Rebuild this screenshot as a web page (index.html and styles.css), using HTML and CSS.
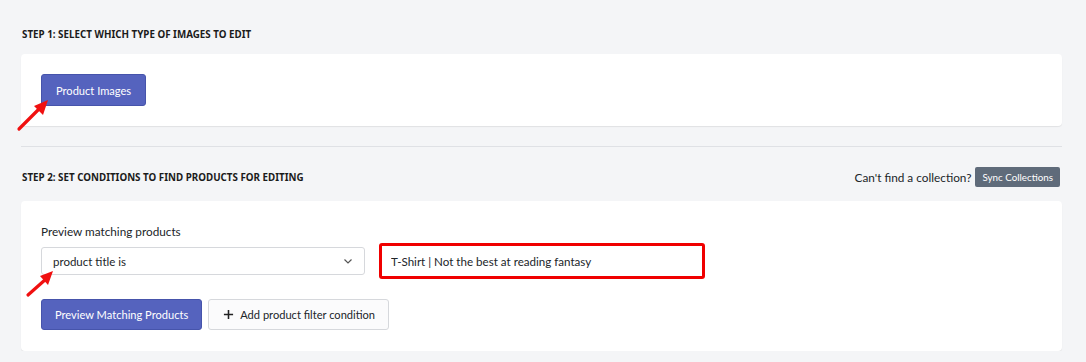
FILE: index.html
```html
<!DOCTYPE html>
<html lang="en">
<head>
  <meta charset="UTF-8">
  <meta name="viewport" content="width=device-width, initial-scale=1.0">
  <title>Bulk Image Editor</title>
  <link rel="stylesheet" href="styles.css">
</head>
<body>
  <div class="page">
    <div class="step-head">
      <h2>Step 1: Select which type of images to edit</h2>
    </div>
    <div class="card card-step1">
      <button class="btn btn-primary">Product Images</button>
    </div>

    <hr class="divider">

    <div class="step-head step-head-2">
      <h2>Step 2: Set conditions to find products for editing</h2>
      <div class="sync">
        <span>Can't find a collection?</span>
        <button class="btn btn-sync">Sync Collections</button>
      </div>
    </div>
    <div class="card card-step2">
      <label class="field-label" for="cond">Preview matching products</label>
      <div class="cond-row">
        <div class="select">
          <span>product title is</span>
          <svg width="12" height="12" viewBox="0 0 12 12"><path d="M2.5 4.5 L6 8 L9.5 4.5" fill="none" stroke="#555" stroke-width="1.2"/></svg>
        </div>
        <input class="value-input" id="cond" type="text" value="T-Shirt | Not the best at reading fantasy">
      </div>
      <div class="actions">
        <button class="btn btn-primary btn-lg">Preview Matching Products</button>
        <button class="btn btn-outline">
          <svg width="11" height="11" viewBox="0 0 12 12"><path d="M6 1 V11 M1 6 H11" stroke="#222" stroke-width="1.7"/></svg>
          Add product filter condition
        </button>
      </div>
    </div>
  </div>

  <!-- annotation arrows -->
  <svg class="arrow arrow-1" width="40" height="40" viewBox="0 0 40 40">
    <path d="M4 34 L24 14" stroke="#f01010" stroke-width="3.2" stroke-linecap="round"/>
    <path d="M33 5 L19 11 L28 20 Z" fill="#f01010"/>
  </svg>
  <svg class="arrow arrow-2" width="40" height="40" viewBox="0 0 40 40">
    <path d="M4 34 L22 18" stroke="#f01010" stroke-width="3.2" stroke-linecap="round"/>
    <path d="M29 10 L16 15 L24 24 Z" fill="#f01010"/>
  </svg>
</body>
</html>
```

FILE: styles.css
```css
body {
  margin: 0;
  background: #f4f5f7;
  font-family: Lato, "Noto Sans", sans-serif;
  color: #212529;
}
.page {
  padding: 0 24px 0 21px;
}
.step-head {
  height: 54px;
  display: flex;
  align-items: center;
  justify-content: space-between;
  padding-top: 14px;
  box-sizing: border-box;
}
.step-head h2 {
  margin: 0 0 0 1px;
  font-family: "Noto Sans", sans-serif;
  font-size: 9.8px;
  font-weight: 700;
  text-transform: uppercase;
  color: #1b1b1b;
}
.step-head-2 {
  height: 54px;
  padding-top: 6px;
}
.sync {
  display: flex;
  align-items: center;
  gap: 4px;
  font-size: 11.8px;
  margin-right: 2px;
}
.card {
  background: #fff;
  border-radius: 4px;
  box-shadow: 0 1px 1px rgba(0, 0, 0, 0.08);
  padding: 20px;
}
.card-step1 {
  height: 72px;
  box-sizing: border-box;
}
.card-step2 {
  padding-bottom: 21px;
}
.divider {
  border: none;
  border-top: 1px solid #dfe1e5;
  margin: 20px 0 0 0;
}
.btn {
  font-family: inherit;
  font-size: 11.1px;
  border-radius: 3px;
  cursor: pointer;
}
.btn-primary {
  background: #5563be;
  color: #fff;
  border: 1px solid #4654ab;
  height: 32px;
  padding: 0 14px;
}
.btn-lg {
  height: 31px;
  padding: 0 13px;
}
.btn-sync {
  background: #5f6b7a;
  color: #fff;
  border: none;
  height: 20px;
  padding: 0 7px;
  font-size: 9.8px;
  border-radius: 2px;
}
.btn-outline {
  background: #fbfbfc;
  color: #212529;
  border: 1px solid #d6d8dc;
  height: 31px;
  padding: 0 13px 0 14px;
  display: flex;
  align-items: center;
  gap: 6px;
}
.field-label {
  display: block;
  font-size: 11.75px;
  margin: 3px 0 0 0;
}
.cond-row {
  display: flex;
  align-items: center;
  gap: 14px;
  margin-top: 4px;
}
.select {
  width: 324px;
  height: 28px;
  box-sizing: border-box;
  border: 1px solid #d6d8dc;
  border-radius: 3px;
  display: flex;
  align-items: center;
  justify-content: space-between;
  padding: 0 10px 0 11px;
  font-size: 11.5px;
}
.value-input {
  width: 326px;
  height: 36px;
  box-sizing: border-box;
  border: 3px solid #f00000;
  border-radius: 3px;
  padding: 0 9px;
  font-family: inherit;
  font-size: 11.6px;
  color: #212529;
}
.actions {
  display: flex;
  gap: 6px;
  margin-top: 20px;
}
.arrow {
  position: absolute;
}
.arrow-1 {
  left: 15px;
  top: 95px;
}
.arrow-2 {
  left: 24px;
  top: 261px;
}
```
